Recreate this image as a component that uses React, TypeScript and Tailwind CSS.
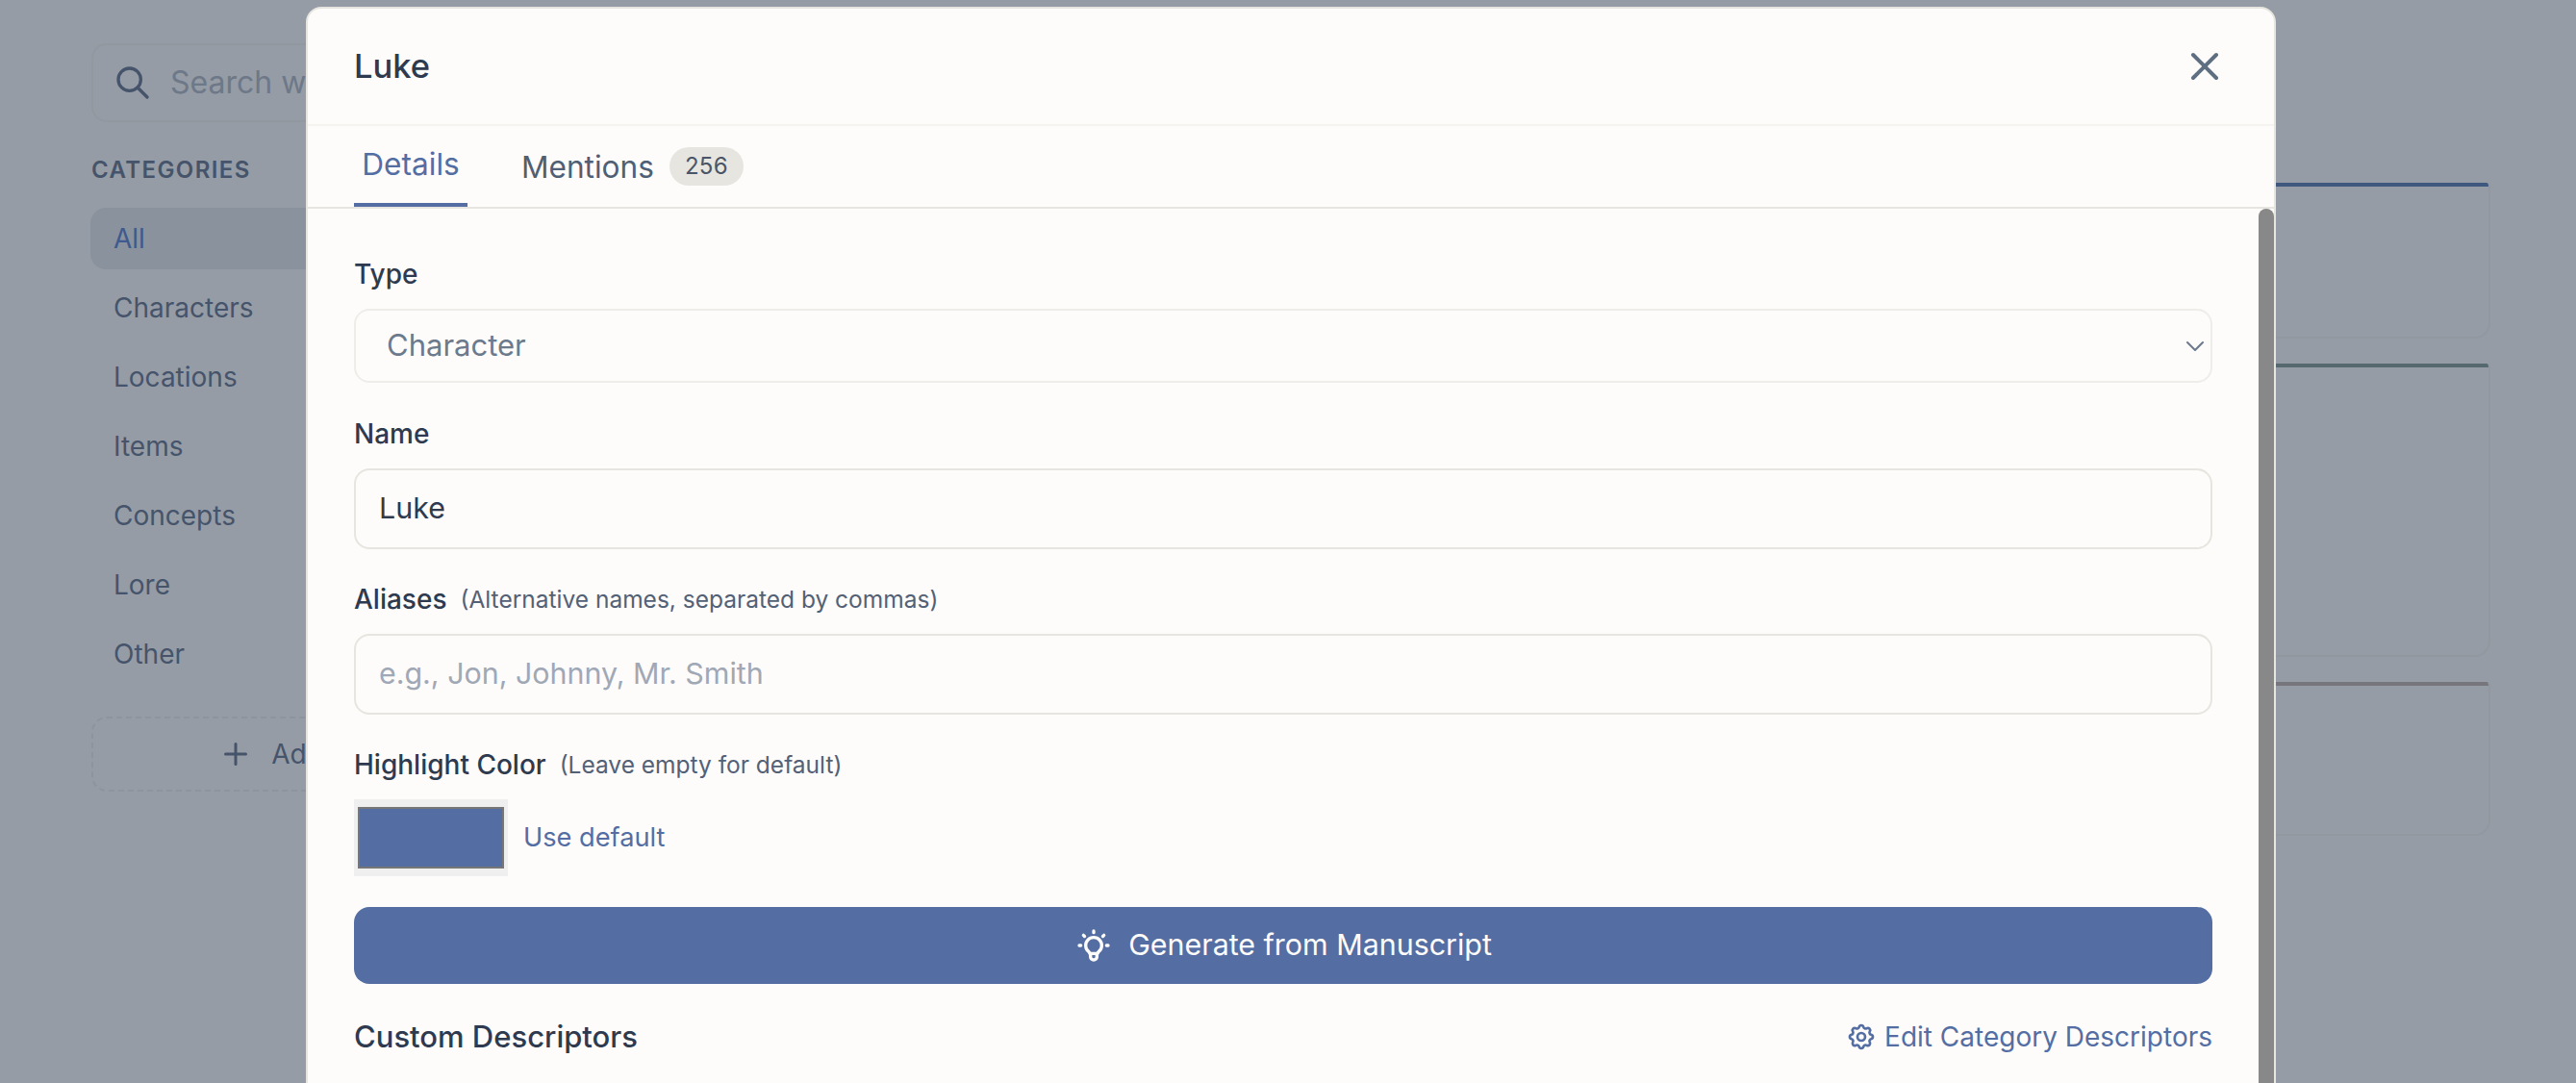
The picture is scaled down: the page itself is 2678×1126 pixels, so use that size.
import { TbBulb, TbChevronDown, TbPlus, TbSearch, TbSettings, TbX } from 'react-icons/tb'

const CATEGORIES = ['All', 'Characters', 'Locations', 'Items', 'Concepts', 'Lore', 'Other']

const CARDS = [
  { bar: 'bg-[#3f5880]', height: 'h-[162px]' },
  { bar: 'bg-[#56696f]', height: 'h-[305px]' },
  { bar: 'bg-[#78767d]', height: 'h-[160px]' },
]

function Sidebar() {
  return (
    <aside className="w-[545px] shrink-0 pl-[94px] pt-[45px]">
      <div className="ml-[1px] flex h-[82px] items-center gap-[19px] rounded-[16px] border-2 border-[#91989f] pl-[21px] text-[32px] text-[#6d7888]">
        <TbSearch className="size-[40px] text-[#46546b]" />
        <span>Search wiki...</span>
      </div>

      <h2 className="mt-[36px] ml-[1px] text-[24px] leading-[28px] font-semibold tracking-[1.4px] text-[#46546b] uppercase">
        Categories
      </h2>

      <ul className="mt-[25px] flex flex-col">
        {CATEGORIES.map((name, i) => (
          <li
            key={name}
            className={`flex h-[64px] items-center rounded-[16px] px-[24px] text-[28px] ${i < 6 ? 'mb-[8px]' : ''} ${
              i === 0 ? 'bg-[#8a929e] text-[#3f5a8e]' : 'text-[#46546b]'
            }`}
          >
            {name}
          </li>
        ))}
      </ul>

      <div className="mt-[33px] ml-[1px] flex h-[78px] items-center justify-center gap-[19px] rounded-[16px] border-2 border-dashed border-[#8d949e] text-[28px] text-[#46546b]">
        <TbPlus className="size-[36px]" />
        <span>Add Entry</span>
      </div>
    </aside>
  )
}

function Cards() {
  return (
    <main className="flex flex-1 flex-col gap-[26px] pt-[190px] pr-[89px] pl-[68px]">
      {CARDS.map((card) => (
        <div key={card.bar} className={`${card.height} overflow-hidden rounded-t-[4px] rounded-b-[16px] border-2 border-t-0 border-[#91989f]`}>
          <div className={`-mx-[2px] h-[4px] ${card.bar}`} />
        </div>
      ))}
    </main>
  )
}

function FieldLabel({ label, hint }: { label: string; hint?: string }) {
  return (
    <div className="flex items-center gap-[14px] text-[28px] leading-[40px] font-medium text-[#2d3a4f]">
      <span>{label}</span>
      {hint && <span className="text-[24.5px] font-normal text-[#536177]">{hint}</span>}
    </div>
  )
}

function WikiModal() {
  return (
    <div className="absolute top-[7px] left-[318px] flex h-[1200px] w-[2048px] flex-col overflow-hidden rounded-[16px] border-2 border-[#e7e5df] bg-[#fdfcfa]">
      <header className="flex h-[122px] shrink-0 items-center justify-between border-b-2 border-[#f5f4f0] px-[48px]">
        <h1 className="text-[34.5px] font-medium text-[#2d3a4f]">Luke</h1>
        <TbX className="size-[48px] text-[#5f6f82]" />
      </header>

      <div className="flex h-[86px] shrink-0 items-end gap-[24px] border-b-2 border-[#e7e5df] px-[48px]">
        <div className="flex h-[84px] w-[118px] items-center justify-center border-b-4 border-[#546ea3] text-[31.6px] text-[#546ea3]">
          Details
        </div>
        <div className="flex h-[84px] items-center gap-[16px] px-[32px] text-[31.6px] text-[#4f5f75]">
          <span className="mt-[2px]">Mentions</span>
          <span className="flex h-[40px] w-[77px] items-center justify-center rounded-full bg-[#e7e5df] text-[24px] tracking-[0.3px] text-[#4a5568]">
            256
          </span>
        </div>
      </div>

      <div className="relative min-h-0 flex-1">
        <div className="absolute top-0 right-0 bottom-0 w-[16px] rounded-t-[8px] bg-[#888888]" />
        <div className="flex flex-col pt-[48px] pr-[64px] pl-[48px]">
          <FieldLabel label="Type" />
          <div className="mt-[16px] flex h-[77px] items-center justify-between rounded-[16px] border-2 border-[#efede9] pl-[32px] text-[31px] text-[#6b7a8c]">
            <span>Character</span>
            <TbChevronDown className="size-[32px] text-[#6b7a8c]" strokeWidth={1.5} />
          </div>

          <div className="mt-[33px]">
            <FieldLabel label="Name" />
          </div>
          <div className="mt-[16px] flex h-[84px] items-center rounded-[16px] border-2 border-[#e7e5df] px-[24px] text-[30.4px] text-[#2d3a4f]">
            Luke
          </div>

          <div className="mt-[32px]">
            <FieldLabel label="Aliases" hint="(Alternative names, separated by commas)" />
          </div>
          <div className="mt-[16px] flex h-[84px] items-center rounded-[16px] border-2 border-[#e7e5df] px-[24px] text-[30.4px] text-[#a0a8b6]">
            e.g., Jon, Johnny, Mr. Smith
          </div>

          <div className="mt-[32px]">
            <FieldLabel label="Highlight Color" hint="(Leave empty for default)" />
          </div>
          <div className="mt-[16px] flex items-center gap-[16px]">
            <div className="h-[80px] w-[160px] bg-[#efefef] px-[4px] py-[8px]">
              <div className="h-full border-2 border-[#767676] bg-[#546ea3]" />
            </div>
            <span className="text-[27.2px] text-[#546ea3]">Use default</span>
          </div>

          <button className="mt-[32px] flex h-[80px] items-center justify-center gap-[16px] rounded-[16px] bg-[#546ea3] text-[30.4px] text-[#fdfcfa]">
            <TbBulb className="size-[40px]" />
            Generate from Manuscript
          </button>

          <div className="mt-[32px] flex items-center justify-between">
            <h3 className="text-[31px] font-medium text-[#2d3a4f]">Custom Descriptors</h3>
            <span className="flex items-center gap-[8px] text-[28px] text-[#546ea3]">
              <TbSettings className="size-[32px]" />
              Edit Category Descriptors
            </span>
          </div>
        </div>
      </div>
    </div>
  )
}

export default function App() {
  return (
    <div className="relative flex h-[1126px] w-[2678px] overflow-hidden bg-[#959ca5] font-['Inter',sans-serif]">
      <Sidebar />
      <Cards />
      <WikiModal />
    </div>
  )
}
